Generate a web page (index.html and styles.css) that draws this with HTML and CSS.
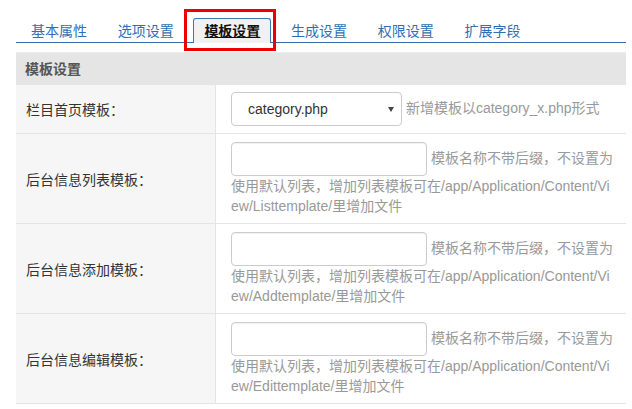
FILE: index.html
```html
<!DOCTYPE html>
<html lang="zh-CN">
<head>
<meta charset="utf-8">
<title>模板设置</title>
<link rel="stylesheet" href="styles.css">
</head>
<body>
<div class="page">
  <ul class="tabs">
    <li class="tab"><a href="#">基本属性</a></li>
    <li class="tab"><a href="#">选项设置</a></li>
    <li class="tab active"><a href="#">模板设置</a><span class="mark"></span></li>
    <li class="tab"><a href="#">生成设置</a></li>
    <li class="tab"><a href="#">权限设置</a></li>
    <li class="tab"><a href="#">扩展字段</a></li>
  </ul>

  <div class="panel">
    <div class="panel-title">模板设置</div>

    <div class="row row-short">
      <div class="label">栏目首页模板：</div>
      <div class="field">
        <span class="select-wrap"><select class="select"><option>category.php</option></select><span class="caret"></span></span>
        <span class="hint">新增模板以category_x.php形式</span>
      </div>
    </div>

    <div class="row">
      <div class="label">后台信息列表模板：</div>
      <div class="field">
        <input class="input" type="text">
        <span class="hint">模板名称不带后缀，不设置为使用默认列表，增加列表模板可在/app/Application/Content/View/Listtemplate/里增加文件</span>
      </div>
    </div>

    <div class="row">
      <div class="label">后台信息添加模板：</div>
      <div class="field">
        <input class="input" type="text">
        <span class="hint">模板名称不带后缀，不设置为使用默认列表，增加列表模板可在/app/Application/Content/View/Addtemplate/里增加文件</span>
      </div>
    </div>

    <div class="row">
      <div class="label">后台信息编辑模板：</div>
      <div class="field">
        <input class="input" type="text">
        <span class="hint">模板名称不带后缀，不设置为使用默认列表，增加列表模板可在/app/Application/Content/View/Edittemplate/里增加文件</span>
      </div>
    </div>
  </div>
</div>
</body>
</html>
```

FILE: styles.css
```css
html, body {
  margin: 0;
  padding: 0;
  background: #fff;
}

body {
  font-family: "Liberation Sans", "Noto Sans CJK SC", sans-serif;
  font-size: 14px;
  color: #333;
}

.page {
  padding: 0 6px 0 16px;
}

/* Tabs */
.tabs {
  display: flex;
  align-items: flex-end;
  list-style: none;
  margin: 0;
  padding: 18px 0 0 4px;
  border-bottom: 1px solid #2f6fb3;
}

.tab {
  position: relative;
  margin-right: 8.7px;
}

.tab a {
  display: block;
  height: 24px;
  line-height: 24px;
  padding: 0 10px;
  border: 1px solid transparent;
  border-bottom: 0;
  border-radius: 3px 3px 0 0;
  color: #2f6fb3;
  text-decoration: none;
  box-sizing: border-box;
}

.tab.active {
  margin-bottom: -1px;
}

.tab.active a {
  height: 25px;
  background: #f1f1f1;
  border-color: #3a77b5;
  color: #111;
  font-weight: bold;
  text-decoration: underline;
}

.tab .mark {
  position: absolute;
  top: -9px;
  left: -9px;
  right: -5px;
  bottom: -8px;
  border: 3px solid #ee0000;
  pointer-events: none;
}

/* Panel */
.panel {
  margin-top: 9px;
}

.panel-title {
  height: 33px;
  line-height: 33px;
  padding-left: 9px;
  background: #e5e5e5;
  border-top: 1px solid #ececec;
  box-sizing: border-box;
  color: #555;
  font-weight: bold;
}

.row {
  display: grid;
  grid-template-columns: 200px 1fr;
  border-bottom: 1px solid #e4e4e4;
}

.label {
  display: flex;
  align-items: center;
  padding-left: 10px;
  background: #f6f6f6;
  border-right: 1px solid #e4e4e4;
  color: #333;
}

.field {
  padding: 8px 10px 7px 15px;
  line-height: 20px;
  word-break: break-all;
}

.row-short .field {
  padding: 7px 10px 7px 15px;
}

.hint {
  color: #999;
}

.input {
  display: inline-block;
  width: 196px;
  height: 34px;
  margin: 0;
  padding: 0 8px;
  border: 1px solid #ccc;
  border-radius: 4px;
  box-sizing: border-box;
  box-shadow: inset 0 1px 1px rgba(0, 0, 0, 0.06);
  vertical-align: middle;
  font: inherit;
}

.select-wrap {
  position: relative;
  display: inline-block;
  vertical-align: middle;
}

.select {
  display: block;
  width: 171px;
  height: 34px;
  margin: 0;
  padding: 0 20px 0 16px;
  border: 1px solid #ccc;
  border-radius: 4px;
  background: #fff;
  box-sizing: border-box;
  appearance: none;
  -webkit-appearance: none;
  font: inherit;
  color: #333;
}

.caret {
  position: absolute;
  right: 8px;
  top: 15px;
  width: 0;
  height: 0;
  border-left: 3px solid transparent;
  border-right: 3px solid transparent;
  border-top: 5px solid #444;
  pointer-events: none;
}
```
